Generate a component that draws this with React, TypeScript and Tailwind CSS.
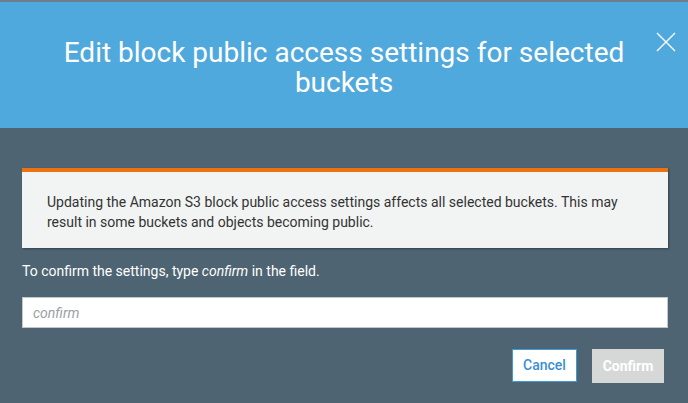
export default function App() {
  return (
    <div className="h-[403px] w-[688px] overflow-hidden bg-[#4e6472] font-['Roboto',sans-serif]">
      {/* top strip */}
      <div className="h-[2px] bg-[#6d7f8c]"></div>
      {/* header */}
      <div className="relative h-[126px] bg-[#4fa9dd] flex items-center justify-center px-[60px]">
        <h1 className="text-center text-white text-[28px] leading-[30px] font-normal max-w-[570px] pt-[5px]">
          Edit block public access settings for selected buckets
        </h1>
        <button className="absolute right-[12px] top-[30px] text-white">
          <svg width="20" height="20" viewBox="0 0 20 20" fill="none" stroke="currentColor" strokeWidth="1.4">
            <path d="M1 1 19 19M19 1 1 19" />
          </svg>
        </button>
      </div>
      {/* body */}
      <div className="pl-[22px] pr-[20px] pt-[40px]">
        {/* alert */}
        <div className="bg-[#f2f4f3] border-t-4 border-[#ec7211] shadow-[1px_1px_2px_rgba(0,0,0,0.35)] pl-[25px] pr-[40px] pt-[20px] pb-[16px] text-[14px] leading-[20px] text-[#333333]">
          Updating the Amazon S3 block public access settings affects all selected buckets. This may result in some buckets and objects becoming public.
        </div>
        {/* confirm label */}
        <p className="mt-[13px] text-[14px] leading-[20px] text-white">
          To confirm the settings, type <i>confirm</i> in the field.
        </p>
        <input
          placeholder="confirm"
          className="mt-[16px] block w-full h-[31px] bg-white border border-[#c0c8cc] px-[10px] text-[14px] italic placeholder:text-[#9aa0a4] outline-none"
        />
        {/* actions */}
        <div className="mt-[21px] flex justify-end gap-[15px] pr-[4px]">
          <button className="h-[33px] w-[65px] bg-white border border-[#3f9bd8] text-[#3b8fd4] text-[14px] font-medium">
            Cancel
          </button>
          <button className="h-[34px] w-[72px] bg-[#d5d8d7] text-white text-[14px] font-bold">
            Confirm
          </button>
        </div>
      </div>
    </div>
  );
}
